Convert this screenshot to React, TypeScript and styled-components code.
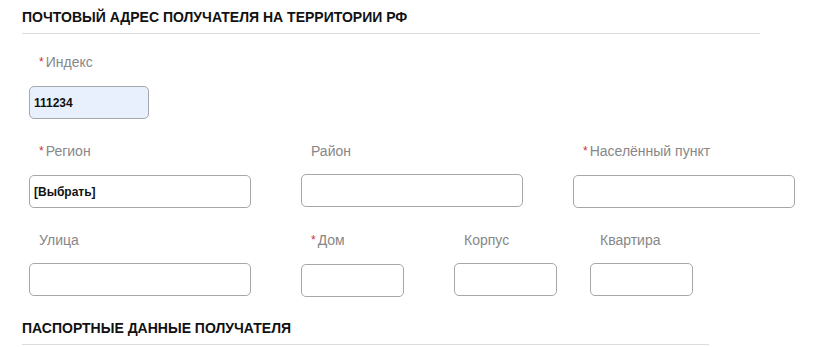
import React from 'react';
import styled, { createGlobalStyle } from 'styled-components';

const GlobalStyle = createGlobalStyle`
  body {
    margin: 0;
    background: #fff;
    font-family: 'Liberation Sans', Arial, sans-serif;
  }
`;

const Page = styled.div`
  padding-left: 22px;
`;

const SectionTitle = styled.h2<{ $width: number; $top?: number }>`
  margin: ${(p) => p.$top ?? 0}px 0 0;
  width: ${(p) => p.$width}px;
  padding: 9px 0 8px;
  border-bottom: 1px solid #dcdcdc;
  font-size: 14px;
  line-height: 16px;
  font-weight: bold;
  color: #111;
`;

const Fields = styled.div`
  padding: 20px 0 0 7px;
  display: flex;
  flex-direction: column;
  gap: 24px;
`;

const Row = styled.div`
  display: flex;
  gap: 50px;
`;

const Field = styled.div<{ $width: number; $shift?: number }>`
  width: ${(p) => p.$width}px;
  margin-left: ${(p) => p.$shift ?? 0}px;
  display: flex;
  flex-direction: column;
  gap: 15px;
`;

const Label = styled.label`
  padding-left: 10px;
  font-size: 14px;
  line-height: 16px;
  color: #878787;
  white-space: nowrap;
`;

const Star = styled.span`
  color: #c8333a;
  font-size: 12px;
  margin-right: 2px;
  position: relative;
  top: -1px;
`;

const Input = styled.input<{ $filled?: boolean }>`
  box-sizing: border-box;
  width: 100%;
  height: 33px;
  padding: 0 4px;
  border: 1px solid #a4a7ab;
  border-radius: 5px;
  background: ${(p) => (p.$filled ? '#e8f0fe' : '#fff')};
  font-family: 'Liberation Sans', Arial, sans-serif;
  font-size: 12px;
  font-weight: bold;
  color: #111;
  outline: none;
`;

type FieldProps = {
  label: string;
  required?: boolean;
  width: number;
  shift?: number;
  value?: string;
  filled?: boolean;
};

function FormField({ label, required, width, shift, value = '', filled }: FieldProps) {
  return (
    <Field $width={width} $shift={shift}>
      <Label>
        {required && <Star>*</Star>}
        {label}
      </Label>
      <Input $filled={filled} defaultValue={value} readOnly />
    </Field>
  );
}

export default function App() {
  return (
    <Page>
      <GlobalStyle />
      <SectionTitle $width={738}>ПОЧТОВЫЙ АДРЕС ПОЛУЧАТЕЛЯ НА ТЕРРИТОРИИ РФ</SectionTitle>
      <Fields>
        <Row>
          <FormField label="Индекс" required width={120} value="111234" filled />
        </Row>
        <Row>
          <FormField label="Регион" required width={222} value="[Выбрать]" />
          <FormField label="Район" width={222} />
          <FormField label="Населённый пункт" required width={222} />
        </Row>
        <Row>
          <FormField label="Улица" width={222} />
          <FormField label="Дом" required width={103} />
          <FormField label="Корпус" width={103} />
          <FormField label="Квартира" width={103} shift={-17} />
        </Row>
      </Fields>
      <SectionTitle $width={687} $top={14}>ПАСПОРТНЫЕ ДАННЫЕ ПОЛУЧАТЕЛЯ</SectionTitle>
    </Page>
  );
}
